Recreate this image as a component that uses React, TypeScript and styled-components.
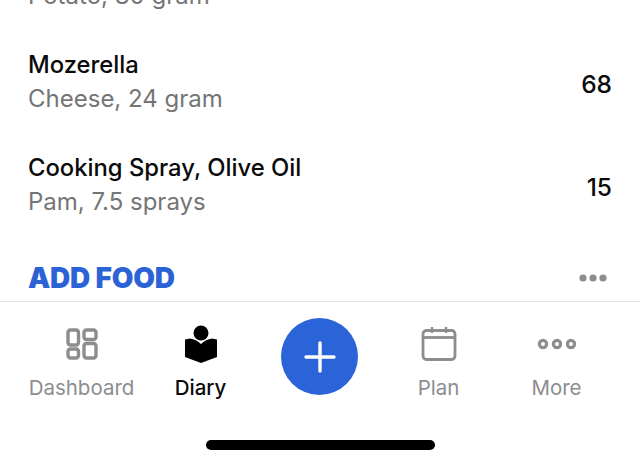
import React from "react";
import styled, { createGlobalStyle } from "styled-components";

const Global = createGlobalStyle`
  html, body { margin: 0; padding: 0; background: #fff; }
  body { font-family: Inter, "Liberation Sans", sans-serif; }
  #root { width: 640px; height: 461px; overflow: hidden; }
`;

const Screen = styled.div`
  width: 640px;
  height: 461px;
  display: flex;
  flex-direction: column;
  overflow: hidden;
  background: #fff;
`;

const List = styled.div`
  height: 301px;
  flex: none;
  display: flex;
  flex-direction: column;
  justify-content: flex-end;
  padding: 0 28px 5px;
  box-sizing: border-box;
  overflow: hidden;
`;

const Row = styled.div`
  display: flex;
  align-items: center;
  justify-content: space-between;
  height: 103px;
  flex: none;
`;

const PartialRow = styled.div`
  flex: none;
  padding-bottom: 20px;
`;

const RowText = styled.div`
  display: flex;
  flex-direction: column;
  gap: 5px;
`;

const Name = styled.div`
  font-size: 23.8px;
  line-height: 29px;
  font-weight: 500;
  color: #0a0a0a;
`;

const Detail = styled.div`
  font-size: 24px;
  line-height: 29px;
  color: #747577;
`;

const Calories = styled.div`
  font-size: 24.5px;
  font-weight: 500;
  color: #0a0a0a;
  margin-top: 4px;
`;

const AddRow = styled.div`
  display: flex;
  align-items: center;
  justify-content: space-between;
  height: 36px;
  margin-top: 24px;
  padding-right: 5px;
  flex: none;
`;

const AddFood = styled.div`
  font-size: 28px;
  font-weight: 900;
  color: #2b63d6;
  letter-spacing: -0.2px;
`;

const TabBar = styled.nav`
  flex: none;
  height: 160px;
  border-top: 1.5px solid #e2e3e4;
  box-sizing: border-box;
  padding: 0 22px;
  display: grid;
  grid-template-columns: repeat(4, 119px) 117px;
  grid-template-rows: 118px 1fr;
  position: relative;
`;

const Tab = styled.div<{ $active?: boolean }>`
  display: flex;
  flex-direction: column;
  align-items: center;
  padding-top: 24px;
  box-sizing: border-box;
  color: ${(p) => (p.$active ? "#0a0a0a" : "#8c8d8f")};
  font-size: 20.5px;
  font-weight: ${(p) => (p.$active ? 500 : 400)};
`;

const IconSlot = styled.div`
  height: 36px;
  display: flex;
  align-items: center;
  justify-content: center;
`;

const TabLabel = styled.div`
  margin-top: 13px;
  line-height: 26px;
  white-space: nowrap;
`;

const AddButton = styled.div`
  justify-self: center;
  margin-top: 16px;
  width: 77px;
  height: 77px;
  border-radius: 50%;
  background: #2b63d9;
  display: flex;
  align-items: center;
  justify-content: center;
`;

const HomeBar = styled.div`
  position: absolute;
  left: 206px;
  top: 138px;
  width: 229px;
  height: 10px;
  border-radius: 5px;
  background: #000;
`;

export default function App() {
  return (
    <Screen>
      <Global />
      <List>
        <PartialRow>
          <Detail>Potato, 80 gram</Detail>
        </PartialRow>
        <Row>
          <RowText>
            <Name>Mozerella</Name>
            <Detail>Cheese, 24 gram</Detail>
          </RowText>
          <Calories>68</Calories>
        </Row>
        <Row>
          <RowText>
            <Name>Cooking Spray, Olive Oil</Name>
            <Detail>Pam, 7.5 sprays</Detail>
          </RowText>
          <Calories>15</Calories>
        </Row>
        <AddRow>
          <AddFood>ADD FOOD</AddFood>
          <svg width="28" height="10" viewBox="0 0 28 10" fill="#8c8d8f">
            <circle cx="4" cy="5" r="3.6" />
            <circle cx="14" cy="5" r="3.6" />
            <circle cx="24" cy="5" r="3.6" />
          </svg>
        </AddRow>
      </List>
      <TabBar>
        <Tab>
          <IconSlot>
            <svg width="32" height="32" viewBox="0 0 32 32" fill="none" stroke="#8c8d8f" strokeWidth="3.4">
              <rect x="2" y="2" width="10.5" height="15" rx="2.5" />
              <rect x="18" y="2" width="12" height="9.5" rx="2.5" />
              <rect x="2" y="21" width="10.5" height="9" rx="2.5" />
              <rect x="18" y="15.5" width="12" height="14.5" rx="2.5" />
            </svg>
          </IconSlot>
          <TabLabel>Dashboard</TabLabel>
        </Tab>
        <Tab $active>
          <IconSlot>
            <svg width="34" height="38" viewBox="0 0 34 38" fill="#000">
              <circle cx="17" cy="8" r="7.5" />
              <path d="M1 14.5 L6 13.5 C10 14 14 16 17 19 C20 16 24 14 28 13.5 L33 14.5 V32 L17 38 L1 32 Z" />
            </svg>
          </IconSlot>
          <TabLabel>Diary</TabLabel>
        </Tab>
        <AddButton>
          <svg width="32" height="32" viewBox="0 0 32 32" stroke="#fff" strokeWidth="3.4" strokeLinecap="round">
            <path d="M16 2 V30 M2 16 H30" />
          </svg>
        </AddButton>
        <Tab>
          <IconSlot>
            <svg width="36" height="36" viewBox="0 0 36 36" fill="none" stroke="#8c8d8f" strokeWidth="2.8">
              <rect x="2" y="4.5" width="32" height="29" rx="3.5" />
              <path d="M2 11.5 H34" />
              <path d="M11 1 V7 M25 1 V7" strokeWidth="2.4" />
            </svg>
          </IconSlot>
          <TabLabel>Plan</TabLabel>
        </Tab>
        <Tab>
          <IconSlot>
            <svg width="40" height="12" viewBox="0 0 40 12" fill="none" stroke="#8c8d8f" strokeWidth="3.2">
              <circle cx="6" cy="6" r="3.6" />
              <circle cx="20" cy="6" r="3.6" />
              <circle cx="34" cy="6" r="3.6" />
            </svg>
          </IconSlot>
          <TabLabel>More</TabLabel>
        </Tab>
        <HomeBar />
      </TabBar>
    </Screen>
  );
}
